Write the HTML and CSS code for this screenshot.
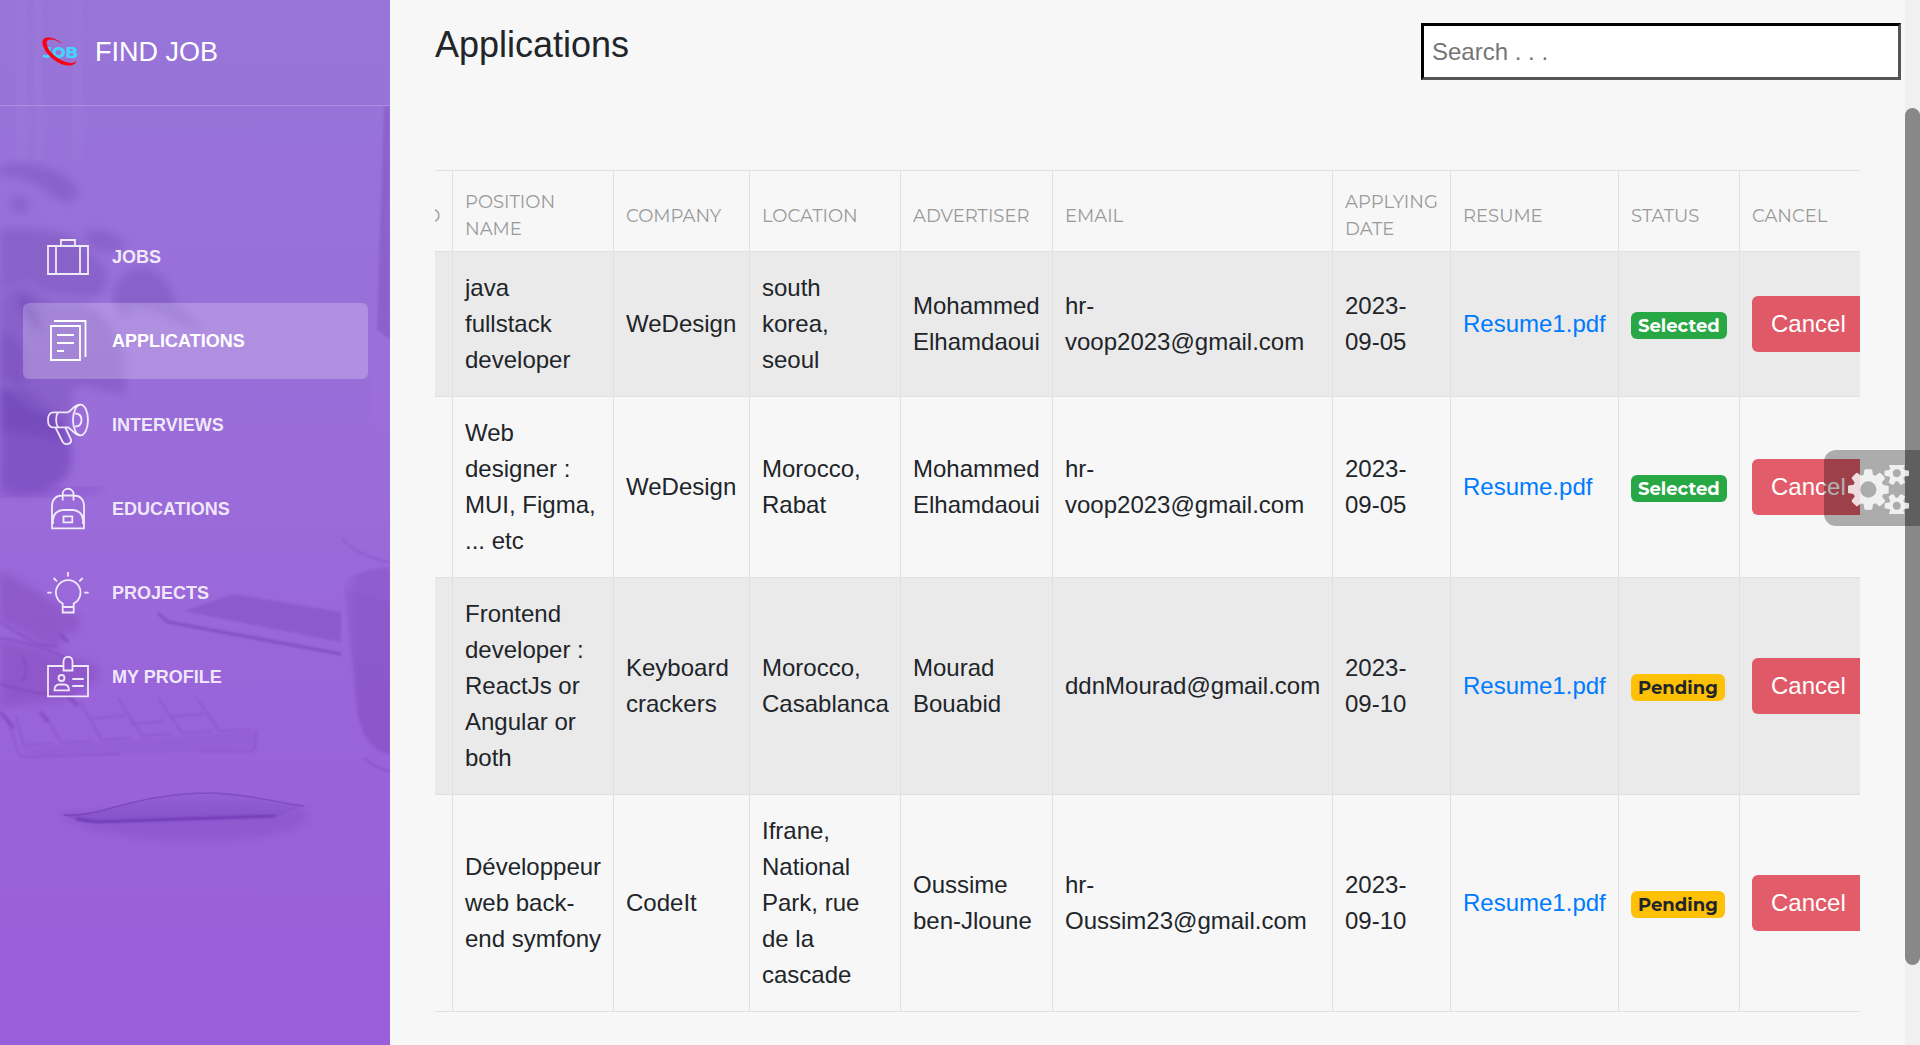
FILE: index.html
```html
<!DOCTYPE html>
<html lang="en">
<head>
<meta charset="utf-8">
<meta name="viewport" content="width=device-width, initial-scale=1">
<title>Find Job - Applications</title>
<link rel="stylesheet" href="styles.css">
</head>
<body>
<div class="layout">
  <aside class="sidebar">
    <svg class="sidebar-photo" viewBox="0 0 390 1045" preserveAspectRatio="xMinYMin slice" aria-hidden="true">
      <defs>
        <filter id="soft" x="-20%" y="-20%" width="140%" height="140%"><feGaussianBlur stdDeviation="4"/></filter>
        <filter id="fine" x="-20%" y="-20%" width="140%" height="140%"><feGaussianBlur stdDeviation="1"/></filter>
        <linearGradient id="cup" x1="0" x2="1"><stop offset="0" stop-color="#7a45b4" stop-opacity=".05"/><stop offset=".3" stop-color="#7a45b4" stop-opacity=".3"/><stop offset="1" stop-color="#7a45b4" stop-opacity=".3"/></linearGradient>
        <linearGradient id="mouse" x1="0" y1="0" x2="0" y2="1"><stop offset="0" stop-color="#6a35b0" stop-opacity=".05"/><stop offset="1" stop-color="#6a35b0" stop-opacity=".4"/></linearGradient>
      </defs>
      <g fill="#fff" opacity=".02" filter="url(#fine)"><path d="M16 0h10v160H16zM34 0h8v160h-8zM72 0h10v160H72z"/></g>
      <g fill="#5f3aa2" opacity=".26" filter="url(#soft)">
        <path d="M0 166C30 160 62 168 78 188C78 204 64 206 50 194C34 180 14 174 0 176Z"/>
        <path d="M12 196L28 198L26 214L12 210Z"/>
        <path d="M84 232C98 226 116 232 128 246L112 252C98 254 86 246 84 232Z"/>
        <path d="M0 230C14 224 44 230 66 234C84 240 88 254 100 262C110 276 110 290 98 296C76 300 34 286 0 290Z"/>
        <path d="M112 296C116 276 132 266 146 268C162 272 174 290 174 304C188 310 198 324 201 332L168 318C150 306 130 306 122 320Z"/>
        <path d="M0 282C30 284 44 298 70 302C90 304 106 312 112 330L124 352L126 394C104 394 86 382 74 388L66 440L0 430Z"/>
      </g>
      <g fill="#5729a6" opacity=".36" filter="url(#soft)">
        <path d="M0 390C20 380 36 402 50 412C66 424 76 446 70 470C62 490 34 498 0 490Z"/>
        <path d="M18 296C34 300 44 318 40 334L26 318Z"/>
        <path d="M0 330C18 340 30 356 26 380C16 392 8 380 0 378Z" opacity=".5"/>
      </g>
      <g stroke="#a383e2" stroke-width="5" fill="none" opacity=".3" filter="url(#soft)" stroke-linecap="round">
        <path d="M2 294C10 288 24 282 34 284M30 286C40 294 50 298 60 302M106 286C104 300 104 310 106 318M8 382C16 396 28 404 44 410"/>
      </g>
      <path d="M0 496L60 492L100 488" stroke="#6a35b0" stroke-width="8" opacity=".25" fill="none" filter="url(#soft)"/>
      <path d="M384 106H390V340L377 330Z" fill="#6f3fb4" opacity=".3" filter="url(#fine)"/>
      <path d="M376 330L390 340V430C380 428 372 420 372 410Z" fill="#a070e0" opacity=".4" filter="url(#fine)"/>
      <g fill="#7c3fae" opacity=".34" filter="url(#soft)">
        <path d="M0 570C26 582 50 602 78 616C86 628 76 636 64 632L60 648C44 650 28 632 0 622Z"/>
        <path d="M0 640C26 640 52 656 90 662C104 668 100 684 84 688L76 694C66 704 30 702 0 708Z"/>
      </g>
      <path d="M0 622C20 634 36 648 58 646M0 638C24 640 60 654 74 662M0 684C26 692 50 696 74 696M22 656C28 666 26 676 22 682" stroke="#6a32a8" stroke-width="2" opacity=".3" fill="none" filter="url(#fine)"/>
      <path d="M0 712L14 728M60 634L68 642M68 696L78 706M40 712L48 722" stroke="#6a32a8" stroke-width="4" opacity=".35" filter="url(#fine)"/>
      <path d="M184 611L234 594L341 612V642L330 640Z" fill="#743fb2" opacity=".32" filter="url(#fine)"/>
      <path d="M158 613L168 622L341 654" stroke="#6230a4" stroke-width="3" opacity=".4" fill="none" filter="url(#fine)"/>
      <path d="M342 538C352 552 376 560 390 562" stroke="#7540b4" stroke-width="2" opacity=".3" fill="none" filter="url(#fine)"/>
      <path d="M344 588C352 570 374 568 390 568V754C376 752 364 742 358 716Z" fill="url(#cup)" filter="url(#fine)"/>
      <path d="M344 588C356 592 376 600 390 602V754C376 752 364 742 358 716Z" fill="#7a45b4" opacity=".12" filter="url(#fine)"/>
      <path d="M364 758C372 766 380 770 390 771" stroke="#7540b4" stroke-width="2" opacity=".4" fill="none" filter="url(#fine)"/>
      <path d="M20 749L256 731V750L34 757Z" fill="#7540b4" opacity=".1" filter="url(#fine)"/>
      <path d="M6 715L18 752C20 758 26 757 34 757L120 754M200 751L246 752C256 752 256 748 256 730M16 716L24 746L54 743M44 714L62 743L94 741M80 702L102 740L132 738M118 698L142 736L172 734M158 698L182 733L212 731M196 698L220 731L250 729M90 719L126 715M130 724L164 721M170 717L204 714" fill="none" stroke="#7540b4" stroke-width="1.6" opacity=".32" filter="url(#fine)"/>
      <path d="M56 812C90 846 260 852 308 822V808Z" fill="#7a45b8" opacity=".28" filter="url(#soft)"/>
      <path d="M60 813C100 818 130 793 212 793C250 794 284 804 304 806C286 812 284 816 274 817L96 823C80 822 68 818 60 813Z" fill="#9763d8"/>
      <path d="M60 813C100 818 130 793 212 793C250 794 284 804 304 806C286 812 284 816 274 817L96 823C80 822 68 818 60 813Z" fill="url(#mouse)"/>
      <path d="M64 815C104 818 130 793 212 793C250 794 284 804 304 806" fill="none" stroke="#7038b0" stroke-width="1.4" opacity=".5"/>
      <path d="M76 819L98 822L275 816" fill="none" stroke="#6631ae" stroke-width="3" opacity=".65" filter="url(#fine)"/>
    </svg>
    <a class="brand" href="#">
      <svg class="brand-logo" viewBox="0 0 40 30" aria-hidden="true">
        <text x="2" y="21" font-family="Montserrat, Inter, sans-serif" font-size="16" font-weight="800" fill="#45d3fa">JOB</text>
        <path d="M22 7C16 2 8-1 3 1.500C-3 8 9 22 19 26.500C27 30 35 29 35.500 23C34 27 28 26.500 21 23.500C11 18.500 4 9 6 4C9 1 16 3 22 7Z" fill="#fb0012"/>
      </svg>
      <span>FIND JOB</span>
    </a>
    <nav class="menu">
      <a class="menu-item" href="#">
        <svg class="menu-icon" viewBox="0 0 42 42"><path d="M1 10H41V38H1ZM14 10V4H28V10M9 10V38M33 10V38"/></svg>
        <span>JOBS</span>
      </a>
      <a class="menu-item active" href="#" aria-current="page">
        <svg class="menu-icon" viewBox="0 0 42 42"><path d="M4 6H33V40H4ZM7 1H38.500V37M10 15H27M10 23H27M10 31H17"/></svg>
        <span>APPLICATIONS</span>
      </a>
      <a class="menu-item" href="#">
        <svg class="menu-icon" viewBox="0 0 42 42"><ellipse cx="33.500" cy="16" rx="7.500" ry="15.300"/><path d="M33.500.7C27 1 25 6 21 8.300H6C2.500 8.300 1 12 1 16S2.500 23.300 6 23.300H21C25 25 27 31 33.500 31.300M11 8.300C8.500 12 8.500 19.500 11 23.300M28 9.500C32 9.500 34.500 12 34.500 16S32 22.500 28 22.500M8.500 23.500L15.500 37.500C17.500 42 25.500 40 24 35.500L18.500 24"/></svg>
        <span>INTERVIEWS</span>
      </a>
      <a class="menu-item" href="#">
        <svg class="menu-icon" viewBox="0 0 42 42"><path d="M5 40.300V18C5 11 9.500 7.500 15 7.500H27C32.500 7.500 37 11 37 18V40.300ZM15.700 12.500V6C15.700-1 26.500-1 26.500 6V12.500M6 36V32C6 26 11 22 16 22H26C31 22 36 26 36 32V36M16.500 28.300H25.300V34.300H16.500Z"/></svg>
        <span>EDUCATIONS</span>
      </a>
      <a class="menu-item" href="#">
        <svg class="menu-icon" viewBox="0 0 42 42"><path d="M15.700 40.500V31.500A12.300 12.300 0 1 1 26.700 31.500V40.500ZM15.700 35H26.700M21 0V4.500M.3 20.700H4.700M37.300 20.700H41.700M6.500 6L10 9.300M35.700 6L32.300 9.300"/></svg>
        <span>PROJECTS</span>
      </a>
      <a class="menu-item" href="#">
        <svg class="menu-icon" viewBox="0 0 42 42"><path d="M16.500 10H1V40.300H41V10H25.500M16.500 14.500V5.500C16.500-.8 25.500-.8 25.500 5.500V14.500ZM7.500 34.300C7.500 30 10 28.500 12.500 28.500H17C19.500 28.500 22 30 22 34.300ZM25.300 23H36.700M25.300 30H36.700"/><circle cx="14.500" cy="22" r="3"/></svg>
        <span>MY PROFILE</span>
      </a>
    </nav>
  </aside>

  <main class="content">
    <header class="topbar">
      <h1 class="title">Applications</h1>
      <input class="search" type="text" placeholder="Search . . ." aria-label="Search">
    </header>
    <div class="table-wrap">
      <table class="applications">
        <colgroup>
          <col class="c-id"><col class="c-position"><col class="c-company"><col class="c-location"><col class="c-advertiser"><col class="c-email"><col class="c-date"><col class="c-resume"><col class="c-status"><col class="c-cancel">
        </colgroup>
        <thead>
          <tr><th>ID</th><th>POSITION NAME</th><th>COMPANY</th><th>LOCATION</th><th>ADVERTISER</th><th>EMAIL</th><th>APPLYING DATE</th><th>RESUME</th><th>STATUS</th><th>CANCEL</th></tr>
        </thead>
        <tbody>
          <tr><td></td><td>java<br>fullstack developer</td><td>WeDesign</td><td>south korea, seoul</td><td>Mohammed Elhamdaoui</td><td>hr-voop2023@gmail.com</td><td>2023-09-05</td><td><a href="#">Resume1.pdf</a></td><td><span class="badge selected">Selected</span></td><td><button class="cancel" type="button">Cancel</button></td></tr>
          <tr><td></td><td>Web designer : MUI, Figma, ... etc</td><td>WeDesign</td><td>Morocco, Rabat</td><td>Mohammed Elhamdaoui</td><td>hr-voop2023@gmail.com</td><td>2023-09-05</td><td><a href="#">Resume.pdf</a></td><td><span class="badge selected">Selected</span></td><td><button class="cancel" type="button">Cancel</button></td></tr>
          <tr><td></td><td>Frontend developer : ReactJs or Angular or both</td><td>Keyboard crackers</td><td>Morocco, Casablanca</td><td>Mourad Bouabid</td><td>ddnMourad@gmail.com</td><td>2023-09-10</td><td><a href="#">Resume1.pdf</a></td><td><span class="badge pending">Pending</span></td><td><button class="cancel" type="button">Cancel</button></td></tr>
          <tr><td></td><td>Développeur web back-end symfony</td><td>CodeIt</td><td>Ifrane, National Park, rue de la cascade</td><td>Oussime ben-Jloune</td><td>hr-Oussim23@gmail.com</td><td>2023-09-10</td><td><a href="#">Resume1.pdf</a></td><td><span class="badge pending">Pending</span></td><td><button class="cancel" type="button">Cancel</button></td></tr>
        </tbody>
      </table>
    </div>
  </main>
  <div class="scroll-track" aria-hidden="true"><div class="scroll-thumb"></div></div>
</div>

<button class="settings" type="button" aria-label="Settings">
  <svg class="settings-icon" viewBox="64 128 1920 1536"><path d="M960 896q0-106-75-181t-181-75-181 75-75 181 75 181 181 75 181-75 75-181zm768 512q0-52-38-90t-90-38-90 38-38 90q0 53 37.500 90.500t90.500 37.500 90.500-37.500 37.500-90.500zm0-1024q0-52-38-90t-90-38-90 38-38 90q0 53 37.500 90.500t90.500 37.500 90.500-37.500 37.500-90.500zm-384 421v185q0 10-7 19.500t-16 10.500l-155 24q-11 35-32 76 34 48 90 115 7 11 7 20 0 12-7 19-23 30-82.500 89.500t-78.500 59.500q-11 0-21-7l-115-90q-37 19-77 31-11 108-23 155-7 24-30 24h-186q-11 0-20-7.500t-10-17.500l-23-153q-34-10-75-31l-118 89q-7 7-20 7-11 0-21-8-144-133-144-160 0-9 7-19 10-14 41-53t47-61q-23-44-35-82l-152-24q-10-1-17-9.500t-7-19.500v-185q0-10 7-19.500t16-10.500l155-24q11-35 32-76-34-48-90-115-7-11-7-20 0-12 7-20 22-30 82-89t79-59q11 0 21 7l115 90q34-18 77-32 11-108 23-154 7-24 30-24h186q11 0 20 7.500t10 17.500l23 153q34 10 75 31l118-89q8-7 20-7 11 0 21 8 144 133 144 160 0 8-7 19-12 16-42 54t-45 60q23 48 34 82l152 23q10 2 17 10.500t7 19.500zm640 533v140q0 16-149 31-12 27-30 52 51 113 51 138 0 4-4 7-122 71-124 71-8 0-46-47t-52-68q-20 2-30 2t-30-2q-14 21-52 68t-46 47q-2 0-124-71-4-3-4-7 0-25 51-138-18-25-30-52-149-15-149-31v-140q0-16 149-31 13-29 30-52-51-113-51-138 0-4 4-7 4-2 35-20t59-34 30-16q8 0 46 46.500t52 67.500q20-2 30-2t30 2q51-71 92-112l6-2q4 0 124 70 4 3 4 7 0 25-51 138 17 23 30 52 149 15 149 31zm0-1024v140q0 16-149 31-12 27-30 52 51 113 51 138 0 4-4 7-122 71-124 71-8 0-46-47t-52-68q-20 2-30 2t-30-2q-14 21-52 68t-46 47q-2 0-124-71-4-3-4-7 0-25 51-138-18-25-30-52-149-15-149-31v-140q0-16 149-31 13-29 30-52-51-113-51-138 0-4 4-7 4-2 35-20t59-34 30-16q8 0 46 46.500t52 67.500q20-2 30-2t30 2q51-71 92-112l6-2q4 0 124 70 4 3 4 7 0 25-51 138 17 23 30 52 149 15 149 31z"/></svg>
</button>
</body>
</html>
```
FILE: styles.css
```css
* { box-sizing: border-box; }

body {
  margin: 0;
  background: #f7f7f7;
  color: #212529;
  font: 24px/36px "Liberation Sans", Arial, sans-serif;
}

.layout { display: flex; min-height: 100vh; }

/* Sidebar */
.sidebar {
  position: relative;
  flex: 0 0 390px;
  overflow: hidden;
  background: linear-gradient(#9775d8, #9a6cd9 45%, #9962da 75%, #995eda);
}
.sidebar-photo { position: absolute; inset: 0; width: 100%; height: 100%; }
.brand {
  position: relative;
  display: flex;
  align-items: center;
  gap: 14px;
  height: 106px;
  padding: 0 0 2px 41px;
  border-bottom: 1px solid #ac8de2;
  color: #fff;
  font-size: 27px;
  text-decoration: none;
}
.brand-logo { width: 40px; height: 30px; }
.menu {
  position: relative;
  display: flex;
  flex-direction: column;
  gap: 8px;
  padding: 113px 22px 0 23px;
}
.menu-item {
  display: flex;
  align-items: center;
  gap: 23px;
  height: 76px;
  padding: 0 24px;
  border-radius: 6px;
  color: rgba(255, 255, 255, .86);
  font-size: 18px;
  font-weight: 700;
  text-decoration: none;
}
.menu-item.active { background: rgba(255, 255, 255, .23); color: #fff; }
.menu-icon {
  width: 42px;
  height: 42px;
  overflow: visible;
  fill: none;
  stroke: currentColor;
  stroke-width: 1.8;
}

/* Content */
.content { flex: 1; min-width: 0; }
.topbar {
  display: flex;
  justify-content: space-between;
  align-items: flex-start;
  padding: 23px 4px 0 45px;
}
.title { margin: 0; font-size: 36px; font-weight: 400; line-height: 44px; }
.search {
  width: 480px;
  height: 57px;
  padding: 0 8px;
  border: 3px solid;
  border-color: #000 #555 #555 #000;
  background: #fff;
  color: #212529;
  font: inherit;
}
.search::placeholder { color: #757575; }
.table-wrap { margin: 90px 45px 0; overflow: hidden; }
.applications {
  width: 1470px;
  margin-left: -28px;
  border-collapse: collapse;
  table-layout: fixed;
}
.c-id { width: 45px; }
.c-position { width: 161px; }
.c-company { width: 136px; }
.c-location { width: 151px; }
.c-advertiser { width: 152px; }
.c-email { width: 280px; }
.c-date { width: 118px; }
.c-resume { width: 168px; }
.c-status { width: 121px; }
.c-cancel { width: 138px; }
.applications th,
.applications td {
  padding: 18px 10px 18px 12px;
  border: 1px solid #dee2e6;
  text-align: left;
  vertical-align: middle;
}
.applications th {
  padding: 18px 10px 8px 12px;
  color: #9a9a9a;
  font: 400 18px/27px Montserrat, Inter, sans-serif;
}
.applications tbody tr:nth-child(odd) { background: #eaeaea; }
.applications td a { color: #007bff; text-decoration: none; }
.badge {
  display: inline-block;
  padding: 5px 7px 4px;
  border-radius: 6px;
  font: 700 18px/18px Montserrat, Inter, sans-serif;
  vertical-align: middle;
}
.selected { background: #28a745; color: #fff; }
.pending { background: #ffc107; color: #212529; }
.cancel {
  display: block;
  height: 56px;
  padding: 0 19px;
  border: 0;
  border-radius: 6px;
  background: rgba(220, 53, 69, .8);
  color: #fff;
  font: inherit;
}

/* Page scrollbar */
.scroll-track { flex: 0 0 15px; padding-top: 108px; background: #f0f0f0; }
.scroll-thumb { height: 82vh; border-radius: 8px; background: #888; }

/* Floating settings tab */
.settings {
  position: fixed;
  top: 450px;
  right: 0;
  display: flex;
  align-items: center;
  height: 76px;
  padding: 2px 11px 0 24px;
  border: 0;
  border-radius: 12px 0 0 12px;
  background: rgba(0, 0, 0, .3);
}
.settings-icon { width: 61px; height: 49px; fill: rgba(255, 255, 255, .82); }
```
